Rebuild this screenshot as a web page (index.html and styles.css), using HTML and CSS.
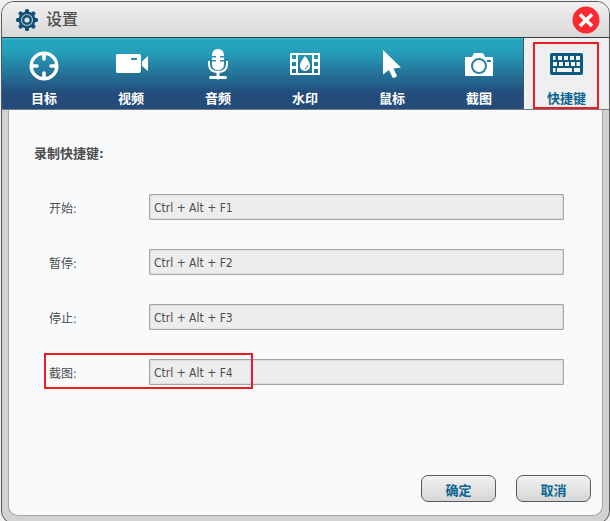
FILE: index.html
```html
<!DOCTYPE html>
<html lang="zh-CN">
<head>
<meta charset="utf-8">
<title>设置</title>
<link rel="stylesheet" href="styles.css">
</head>
<body>
<main class="window">
  <header class="titlebar">
    <svg class="gear" viewBox="0 0 24 24" aria-hidden="true">
      <g fill="#124f73">
        <g id="teeth"><rect x="10" y="1" width="4" height="22" rx="1.500"/><rect x="1" y="10" width="22" height="4" rx="1.500"/></g>
        <use href="#teeth" transform="rotate(45 12 12)"/>
        <circle cx="12" cy="12" r="8.500"/>
      </g>
      <circle cx="12" cy="12" r="5.500" fill="none" stroke="#9fc0d0" stroke-width="1.200"/>
      <circle cx="12" cy="12" r="2.600" fill="#d5dfe4"/>
    </svg>
    <h1 class="title">设置</h1>
    <button class="close" type="button" aria-label="关闭">
      <svg viewBox="0 0 28 28" aria-hidden="true"><circle cx="14" cy="14" r="13.500" fill="#fa2a32"/><path d="M8 8.500L20 20M20 8.500L8 20" stroke="#fff" stroke-width="3.600"/></svg>
    </button>
  </header>

  <nav class="tabs">
    <button class="tab" type="button">
      <svg class="icon" viewBox="0 0 36 32"><circle cx="18" cy="16" r="12.800" fill="none" stroke="#fff" stroke-width="3.400"/><path d="M18 4v5M18 23v5M6 16h5M25 16h5" stroke="#fff" stroke-width="3.600" stroke-linecap="round"/></svg>
      <span>目标</span>
    </button>
    <button class="tab" type="button">
      <svg class="icon" viewBox="0 0 36 32"><path fill="#fff" fill-rule="evenodd" d="M4 4H26Q28 4 28 6V21Q28 23 26 23H4.500Q3 23 3 21V6Q3 4 4 4ZM18 8V10H24V8ZM29 11.500L35 6V21L29 16Z"/></svg>
      <span>视频</span>
    </button>
    <button class="tab" type="button">
      <svg class="icon" viewBox="0 0 36 32"><path fill="#fff" d="M12 6Q12 -1 18 -1T24 6H20V7.500H24V10H20V11.500H24V14Q24 20 18 20T12 14V11.500H16V10H12V7.500H16V6Z"/><path d="M9 11V14Q9 22 18 22T27 14V11" fill="none" stroke="#fff" stroke-width="2"/><path d="M18 22V28M10.500 27.500H25.500" stroke="#fff" stroke-width="3" stroke-linecap="round"/></svg>
      <span>音频</span>
    </button>
    <button class="tab" type="button">
      <svg class="icon" viewBox="0 0 36 32"><path fill="#fff" fill-rule="evenodd" d="M4 3H32Q33 3 33 4V24Q33 25 32 25H4Q3 25 3 24V4Q3 3 4 3ZM5 5V9H9V5ZM5 12V16H9V12ZM5 19V23H9V19ZM11 5V23H25V5ZM27 5V9H31V5ZM27 12V16H31V12ZM27 19V23H31V19Z"/><path d="M18 6Q23 12 23 16A5 5 0 0 1 13 16Q13 12 18 6Z" fill="#fff"/><path d="M20.500 15Q20.500 18 18 19" fill="none" stroke="#2a779b"/></svg>
      <span>水印</span>
    </button>
    <button class="tab" type="button">
      <svg class="icon" viewBox="0 0 36 32"><path fill="#fff" d="M9 0L27 17.500L19.500 18.500L23 26Q21 28.500 18.500 27.500L15 20L9 24.500Z"/></svg>
      <span>鼠标</span>
    </button>
    <button class="tab" type="button">
      <svg class="icon" viewBox="0 0 36 32"><path fill="#fff" d="M5 7H11L13 3H22L24 7H31Q32 7 32 8V25Q32 26 31 26H5Q4 26 4 25V8Q4 7 5 7Z"/><circle cx="18" cy="16" r="7" fill="none" stroke="#2b81a3" stroke-width="2"/><path d="M26 11h4" stroke="#2b81a3" stroke-width="2"/></svg>
      <span>截图</span>
    </button>
    <button class="tab active" type="button" aria-current="page">
      <svg class="icon" viewBox="0 0 36 32"><rect x="1" y="3" width="33" height="22" rx="2" fill="#0b5b82"/><path fill="#f4f4f4" d="M4 6h2.500v4H4zM9 6h4v4H9zM15 6h4v4h-4zM21 6h4v4h-4zM27 6h4v4h-4zM4 12h4v4H4zM10 12h4v4h-4zM16 12h4v4h-4zM22 12h4v4h-4zM27.500 12h3.500v4h-3.500zM4 18h2.500v4H4zM8 18h15v4H8zM25 18h6v4h-6z"/></svg>
      <span>快捷键</span>
    </button>
  </nav>

  <form class="panel">
    <h2 class="heading">录制快捷键:</h2>
    <div class="row"><label for="start">开始:</label><input id="start" type="text" value="Ctrl + Alt + F1"></div>
    <div class="row"><label for="pause">暂停:</label><input id="pause" type="text" value="Ctrl + Alt + F2"></div>
    <div class="row"><label for="stop">停止:</label><input id="stop" type="text" value="Ctrl + Alt + F3"></div>
    <div class="row marked"><label for="shot">截图:</label><input id="shot" type="text" value="Ctrl + Alt + F4"></div>
    <footer class="actions">
      <button class="action" type="submit">确定</button>
      <button class="action" type="button">取消</button>
    </footer>
  </form>
</main>
</body>
</html>
```
FILE: styles.css
```css
*,
*::after {
  box-sizing: border-box;
}

body {
  margin: 0;
  height: 100vh;
  overflow: hidden;
  background: #eef0f2;
  color: #4d4d4d;
  font: 12px/16px "DejaVu Sans Condensed", "Noto Sans CJK SC", sans-serif;
}

button,
input {
  margin: 0;
  font: inherit;
}

.window {
  display: flex;
  flex-direction: column;
  min-height: calc(100vh + 2px);
  margin: 1px 0 0 1px;
  border: 1px solid #55585c;
  border-radius: 13px;
  background: #d2d2d2;
  overflow: hidden;
}

.titlebar {
  display: flex;
  align-items: center;
  height: 36px;
  padding: 0 9px 0 13px;
  border-bottom: 1px solid #34383b;
  background: linear-gradient(#f0f0f0, #d9d9d9);
}

.gear {
  width: 24px;
  height: 24px;
}

.title {
  flex: 1;
  margin: 0 0 0 7px;
  font-size: 16px;
  font-weight: 500;
  line-height: 24px;
}

.close {
  width: 28px;
  height: 28px;
  padding: 0;
  border: 0;
  background: none;
}

.close svg {
  display: block;
}

.tabs {
  display: grid;
  grid-template-columns: repeat(7, 1fr);
  height: 72px;
  margin: 0 -1px;
  border-bottom: 1px solid #76797d;
  background: linear-gradient(#31c4d5 0, #25a5bf 2px, #25a0bb 18%, #234c7b 78%, #234c7b);
}

.tab {
  position: relative;
  display: flex;
  flex-direction: column;
  align-items: center;
  gap: 9px;
  padding: 12px 1px 0 0;
  border: 0;
  background: none;
  color: #fff;
  font-size: 13px;
  font-weight: 700;
}

.icon {
  width: 36px;
  height: 32px;
  overflow: visible;
}

.active {
  border-left: 1px solid #4d5256;
  background: #efefef;
  color: #0b6592;
}

.active::after {
  content: "";
  position: absolute;
  inset: 4px 11px 0 9px;
  border: 2px solid #ed1c24;
}

.panel {
  flex: 1;
  display: flex;
  flex-direction: column;
  margin: 0 6px 7px;
  padding: 36px 11px 13px 25px;
  border: solid #a3a5a7;
  border-width: 0 1px 1px;
  border-radius: 0 0 10px 10px;
  background: #f9fafc;
}

.heading {
  margin: 0 0 32px;
  font-size: 13px;
  font-weight: 700;
  line-height: 16px;
}

.row {
  position: relative;
  display: flex;
  align-items: center;
  margin: 0 27px 29px 15px;
}

.row label {
  width: 100px;
  padding-top: 3px;
}

.row input {
  flex: 1;
  min-width: 0;
  height: 26px;
  padding: 2px 4px 0;
  border: 1px solid #a2a4a7;
  border-radius: 1px;
  background: #ededed;
  box-shadow: inset 0 0 2px #bbb;
  color: #4d4d4d;
}

.marked::after {
  content: "";
  position: absolute;
  left: -5px;
  top: -6px;
  width: 209px;
  height: 36px;
  border: 2px solid #ed1c24;
  pointer-events: none;
}

.actions {
  display: flex;
  justify-content: flex-end;
  gap: 20px;
  margin-top: auto;
}

.action {
  width: 75px;
  height: 27px;
  padding: 4px 0 0;
  border: 1px solid #55585c;
  border-radius: 7px;
  background: linear-gradient(#f2f2f2, #d6d6d6);
  color: #0b6592;
  font-size: 13px;
  font-weight: 700;
}
```
